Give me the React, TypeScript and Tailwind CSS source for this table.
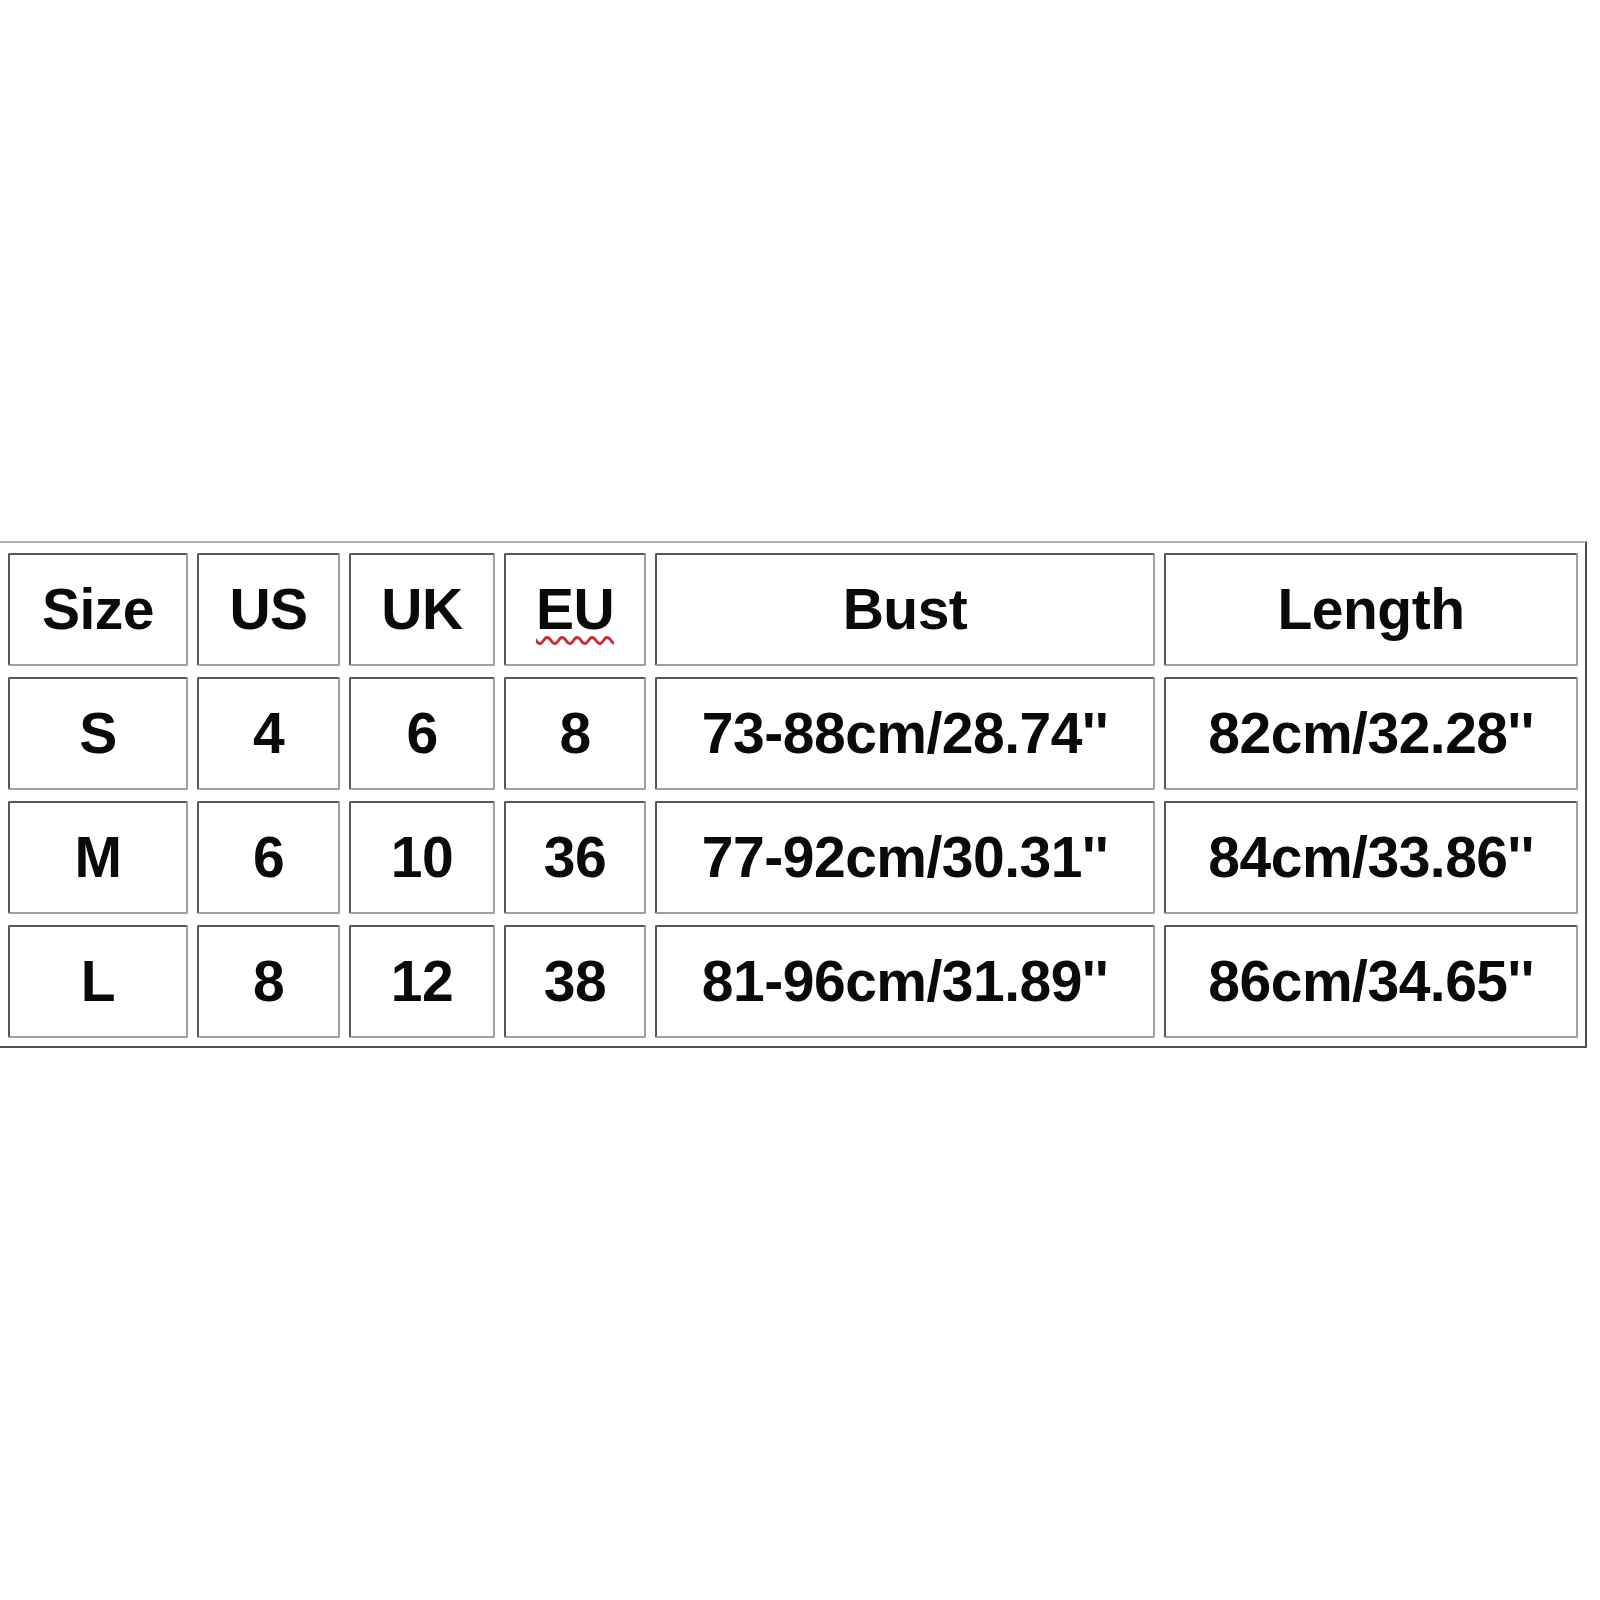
import React from "react";

const header = ["Size", "US", "UK", "EU", "Bust", "Length"];
const rows = [
  ["S", "4", "6", "8", "73-88cm/28.74''", "82cm/32.28''"],
  ["M", "6", "10", "36", "77-92cm/30.31''", "84cm/33.86''"],
  ["L", "8", "12", "38", "81-96cm/31.89''", "86cm/34.65''"],
];

function Cell({ children }: { children: React.ReactNode }) {
  return (
    <div className="flex items-center justify-center border-2 border-t-[#585858] border-l-[#585858] border-b-[#a0a0a0] border-r-[#a0a0a0] rounded-[2px] bg-white">
      <span className="text-[57px] leading-none font-bold tracking-[-0.5px] text-[#0a0a0a]">
        {children}
      </span>
    </div>
  );
}

export default function App() {
  return (
    <div
      className="min-h-[1600px] w-[1600px] bg-white pt-[541px]"
      style={{ fontFamily: '"Liberation Sans", Arial, sans-serif' }}
    >
      <div className="w-[1587px] border-t-2 border-r-2 border-b-2 border-t-[#b4b4b4] border-r-[#4e4e4e] border-b-[#4e4e4e] pl-[8px] pr-[7px] pt-[10px] pb-[8px]">
        <div className="grid grid-cols-[180px_143px_146px_142px_500px_414px] auto-rows-[113px] gap-x-[9px] gap-y-[11px]">
          {header.map((h) =>
            h === "EU" ? (
              <Cell key={h}>
                <span className="underline decoration-wavy decoration-[#c8303c] decoration-[3px] underline-offset-[7px]">
                  EU
                </span>
              </Cell>
            ) : (
              <Cell key={h}>{h}</Cell>
            )
          )}
          {rows.map((r, i) =>
            r.map((c, j) => <Cell key={i + "-" + j}>{c}</Cell>)
          )}
        </div>
      </div>
    </div>
  );
}
